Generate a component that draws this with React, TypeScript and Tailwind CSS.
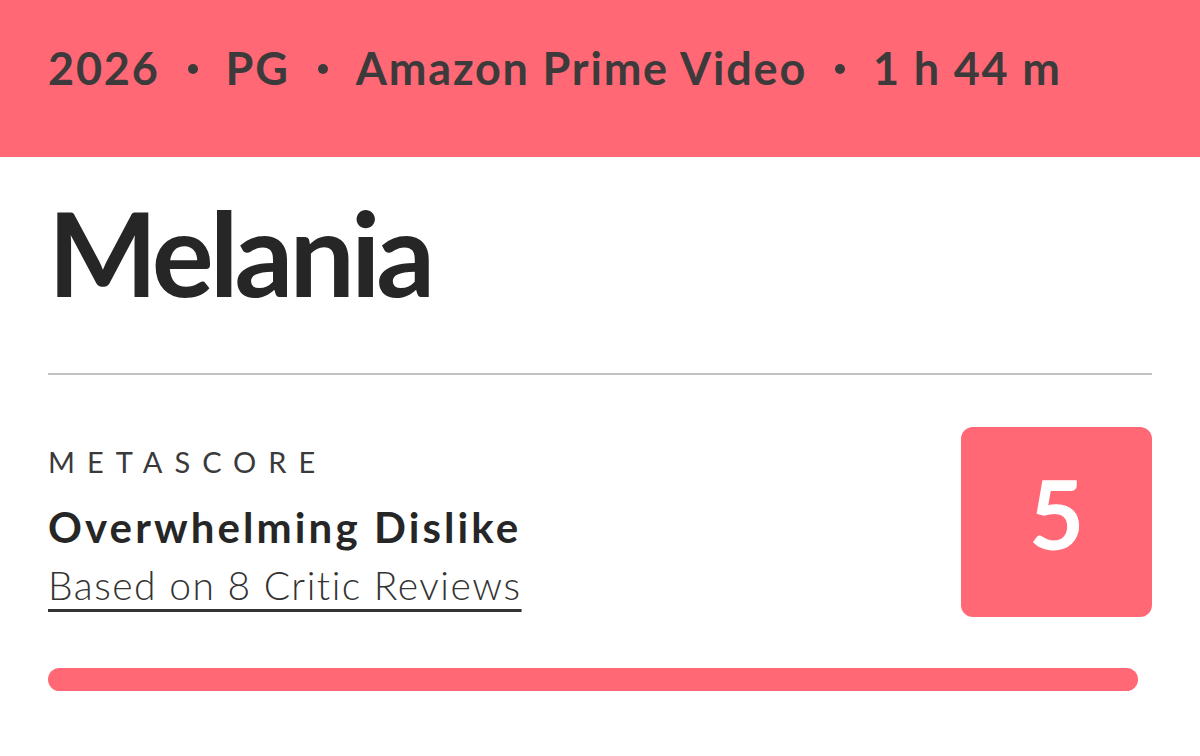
export default function App() {
  const meta = ["2026", "PG", "Amazon Prime Video", "1 h 44 m"];
  return (
    <div className="h-[756px] w-[1200px] overflow-hidden bg-white font-['Lato',sans-serif]">
      <div className="flex h-[157px] items-center bg-[#ff6874] px-12 pb-[20px] text-[45px] font-bold tracking-[1.8px] text-[#3d3a3b]">
        {meta.map((m, i) => (
          <div key={m} className="flex items-center">
            {i > 0 && <span className="mx-[28px] inline-block h-[10px] w-[10px] rounded-full bg-[#3d3a3b]" />}
            <span>{m}</span>
          </div>
        ))}
      </div>

      <div className="px-12">
        <h1 className="pt-[26px] text-[116px] font-bold leading-[140px] tracking-[-4px] text-[#262626]">Melania</h1>
        <div className="mt-[50px] h-[2px] bg-[#c2c2c2]" />

        <div className="mt-[52px] flex items-start justify-between">
          <div className="pt-[18px]">
            <div className="text-[29px] leading-[34px] tracking-[12px] text-[#3a3a3a]">METASCORE</div>
            <div className="mt-[24px] text-[42px] font-bold leading-[48px] tracking-[3.1px] text-[#262626]">Overwhelming Dislike</div>
            <div className="mt-[12px] text-[39px] font-light leading-[44px] tracking-[1.5px] text-[#333] underline decoration-[2.5px] underline-offset-[9px]">
              Based on 8 Critic Reviews
            </div>
          </div>
          <div className="flex h-[190px] w-[191px] items-center justify-center rounded-[12px] bg-[#ff6874] pb-[18px] text-[96px] font-bold text-white">
            5
          </div>
        </div>

        <div className="mt-[51px] mr-[14px] h-[23px] rounded-full bg-[#ff6874]" />
      </div>
    </div>
  );
}
